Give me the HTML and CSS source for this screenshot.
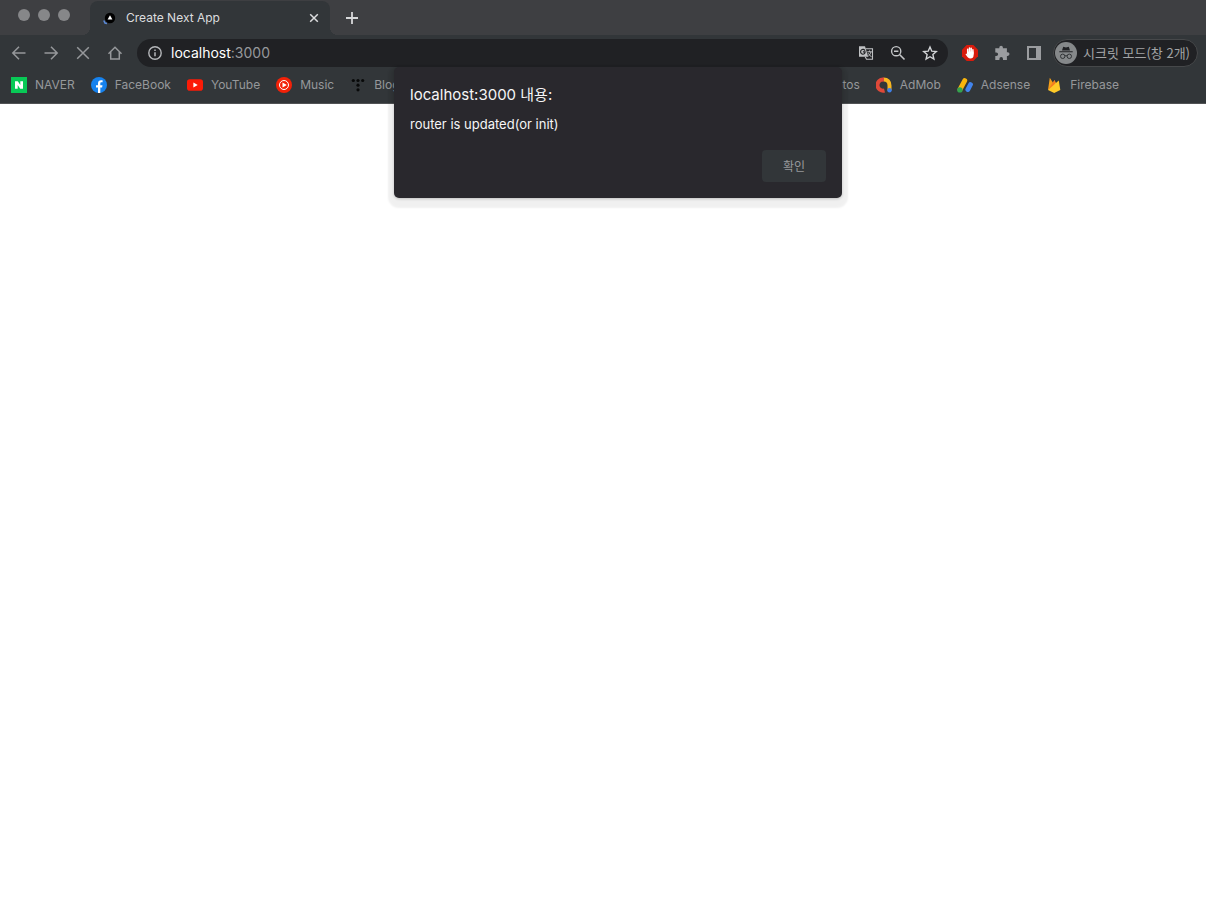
FILE: index.html
```html
<!DOCTYPE html>
<html lang="ko">
<head>
<meta charset="utf-8">
<title>Create Next App</title>
<link rel="stylesheet" href="styles.css">
</head>
<body>
<div class="window">
  <header class="chrome">
    <div class="tab-strip">
      <div class="lights"><span class="light"></span><span class="light"></span><span class="light"></span></div>
      <div class="tab">
        <svg class="icon" viewBox="0 0 16 16"><path d="M1.800 10.500 3 13 5 13.500" fill="none" stroke="#5b8ad8" stroke-width="1.600"/><circle cx="8" cy="8" r="5.200" fill="#000"/><path d="M8 5.300 10.400 9.500H5.600z" fill="#fff"/></svg>
        <span class="tab-title">Create Next App</span>
        <button class="icon-button" aria-label="Close tab"><svg class="icon" viewBox="0 0 16 16"><path d="M4.200 4.200 11.800 11.800M11.800 4.200 4.200 11.800" fill="none" stroke="#dcdddf" stroke-width="1.500"/></svg></button>
      </div>
      <button class="icon-button new-tab" aria-label="New tab"><svg class="icon" viewBox="0 0 16 16"><path d="M8 2v12M2 8h12" stroke="#d7d8da" stroke-width="1.800"/></svg></button>
    </div>

    <div class="toolbar">
      <nav class="nav" aria-label="Navigation">
        <button class="icon-button" aria-label="Back"><svg class="icon" viewBox="0 0 16 16"><path d="M14.500 8H2M8 1.800 1.800 8 8 14.200"/></svg></button>
        <button class="icon-button" aria-label="Forward"><svg class="icon" viewBox="0 0 16 16"><path d="M1.500 8H14M8 1.800 14.200 8 8 14.200"/></svg></button>
        <button class="icon-button" aria-label="Stop"><svg class="icon" viewBox="0 0 16 16"><path d="M2.200 2.200 13.800 13.800M13.800 2.200 2.200 13.800"/></svg></button>
        <button class="icon-button" aria-label="Home"><svg class="icon" viewBox="0 0 16 16"><path d="M1.500 8.700 8 2.200 14.500 8.700M3.700 7v7H6.800M12.300 7v7H6.500"/></svg></button>
      </nav>
      <div class="omnibox">
        <button class="icon-button" aria-label="Site information"><svg class="icon" viewBox="0 0 16 16"><circle cx="8" cy="8" r="6.200" fill="none" stroke="#b5b7ba" stroke-width="1.400"/><path d="M8 7.200v4M8 4.500v1.500" stroke="#b5b7ba" stroke-width="1.500"/></svg></button>
        <span class="address">localhost<span class="port">:3000</span></span>
        <div class="omnibox-actions">
          <button class="icon-button" aria-label="Translate"><svg class="icon" viewBox="0 0 16 16"><path d="M7.500 3.800h7v10.400H8.500l-1.300-2.500" fill="none" stroke="#bfc1c3" stroke-width="1.100"/><path d="M1 1.200h6l3.200 10.600H1z" fill="#bfc1c3"/><path d="M7 5.700C6.200 4.300 4.600 4 3.500 4.900 2 6.100 2.400 8.800 4.600 9.200c1.500.2 2.600-.900 2.500-2.400H4.900" fill="none" stroke="#202124" stroke-width="1.200"/><path d="M9.300 6.800h4.500M11.500 5.500v1.300M13 6.800c-.5 2.200-1.700 3.500-3 4.700M10 8.200l3.600 4" fill="none" stroke="#bfc1c3"/></svg></button>
          <button class="icon-button" aria-label="Zoom"><svg class="icon" viewBox="0 0 16 16"><path d="M9.800 9.800 14.500 14.500M4 6.200h4.400" stroke="#c5c7c9" stroke-width="1.600"/><circle cx="6.200" cy="6.200" r="4.600" fill="none" stroke="#c5c7c9" stroke-width="1.400"/></svg></button>
          <button class="icon-button" aria-label="Bookmark this page"><svg class="icon" viewBox="0 0 16 16"><path d="M8 2 9.800 6.200 14.300 6.600 10.900 9.600 11.900 14 8 11.700 4.100 14 5.100 9.600 1.700 6.600 6.200 6.200z" fill="none" stroke="#d3d5d7" stroke-width="1.400"/></svg></button>
        </div>
      </div>
      <div class="extensions">
        <button class="icon-button" aria-label="Content blocker"><svg class="icon" viewBox="0 0 16 16"><path d="M4.700 0h6.600L16 4.700v6.600L11.300 16H4.700L0 11.300V4.700z" fill="#d91b0c"/><path d="M5.700 9V4.300M7.500 8V3M9.200 8V3.300M10.900 9V4.800" stroke="#fff" stroke-width="1.500" stroke-linecap="round"/><path d="M5 6.500h6.600v3.700c0 2.300-1.300 3.300-3.200 3.300-2 0-2.800-1-4.900-4.200l.7-.7 1.500 1.100z" fill="#fff"/></svg></button>
        <button class="icon-button" aria-label="Extensions"><svg class="icon" viewBox="0 0 16 16"><path d="M1.300 3.300h4V2.500a1.800 1.800 0 0 1 3.600 0v.8h4v4h.8a1.800 1.800 0 0 1 0 3.600h-.8v4H9v-1a1.700 1.700 0 0 0-3.600 0v1H1.300V11h1a1.800 1.800 0 0 0 0-3.600h-1z" fill="#9b9da0"/></svg></button>
        <button class="icon-button" aria-label="Side panel"><svg class="icon" viewBox="0 0 16 16"><path d="M2 2h12v12H2z" fill="none" stroke="#9b9da0" stroke-width="2"/><path d="M10 2h4v12h-4z" fill="#9b9da0"/></svg></button>
      </div>
      <button class="profile">
        <svg class="avatar" viewBox="0 0 22 22"><circle cx="11" cy="11" r="11" fill="#85888a"/><path d="M7 8.500 8.200 4.700 11 5.400 13.800 4.700 15 8.500zM4.300 9.200h13.400v1H4.300z" fill="#202124"/><g fill="none" stroke="#303336"><circle cx="7.700" cy="14.300" r="2.200"/><circle cx="14.300" cy="14.300" r="2.200"/><path d="M9.900 14q1.100-.8 2.200 0"/></g></svg>
        <span>시크릿 모드(창 2개)</span>
      </button>
    </div>

    <nav class="bookmarks" aria-label="Bookmarks">
      <a class="bookmark" href="#"><svg class="icon" viewBox="0 0 16 16"><path d="M0 0h16v16H0z" fill="#08c956"/><path d="M4 4.300h2.800l2.500 3.600V4.300H12v7.400H9.200L6.700 8.100v3.600H4z" fill="#fff"/></svg>NAVER</a>
      <a class="bookmark" href="#"><svg class="icon" viewBox="0 0 16 16"><circle cx="8" cy="8" r="8" fill="#1682ee"/><path d="M7 16v-5.400H5V8.300h2V6.500c0-2.200 1.200-3.300 3.100-3.300l1.500.1v2H10.500C9.600 5.300 9.300 5.800 9.300 6.500v1.800h2.200l-.4 2.300H9.300V16z" fill="#fff"/></svg>FaceBook</a>
      <a class="bookmark" href="#"><svg class="icon" viewBox="0 0 16 16"><rect y="2.300" width="16" height="11.400" rx="2.800" fill="#fb1b07"/><path d="M6.400 5.500 10.700 8 6.400 10.500z" fill="#fff"/></svg>YouTube</a>
      <a class="bookmark" href="#"><svg class="icon" viewBox="0 0 16 16"><circle cx="8" cy="8" r="8" fill="#f32108"/><circle cx="8" cy="8" r="4.500" fill="none" stroke="#fff"/><path d="M6.500 5.400 10.800 8 6.500 10.600z" fill="#fff"/></svg>Music</a>
      <a class="bookmark" href="#"><svg class="icon" viewBox="0 0 16 16"><g fill="#080909"><circle cx="3.300" cy="3.500" r="1.600"/><circle cx="8" cy="3.500" r="1.600"/><circle cx="12.700" cy="3.500" r="1.600"/><circle cx="8" cy="8.200" r="1.600"/><circle cx="8" cy="12.800" r="1.600"/></g></svg>Blog</a>
      <a class="bookmark after-dialog" href="#">Photos</a>
      <a class="bookmark" href="#"><svg class="icon" viewBox="0 0 16 16"><path d="M7.500 2.500A5.600 5.600 0 1 0 8.500 13.500" fill="none" stroke="#df4939" stroke-width="4"/><path d="M7.700 2.500C11.500 2.500 13.500 5 13.500 8.500V13" fill="none" stroke="#f9b720" stroke-width="4"/><path d="M3 3.500A7.600 7.600 0 0 1 8 .5v4z" fill="#df4939"/><circle cx="13.500" cy="13.300" r="2.200" fill="#3f80e8"/></svg>AdMob</a>
      <a class="bookmark" href="#"><svg class="icon" viewBox="0 0 16 16"><g stroke-width="4.800" stroke-linecap="round"><path d="M3 12.500 7.800 3.500" stroke="#f9b50c"/><path d="M10.800 12.600 13.500 7.500" stroke="#4284ed"/></g><circle cx="2.900" cy="12.900" r="2.700" fill="#34a34f"/></svg>Adsense</a>
      <a class="bookmark" href="#"><svg class="icon" viewBox="0 0 16 16"><path d="M2 13 3.800.7 7 5.800 8.500 3l2 4z" fill="#f6a019"/><path d="M2 13 8.500 3l1.500 7z" fill="#f57c20"/><path d="M2 13 12.800 3.500 14.300 13 8.200 16z" fill="#ffca28"/></svg>Firebase</a>
    </nav>
  </header>

  <main class="page"></main>

  <section class="dialog" role="alertdialog" aria-labelledby="dialog-title" aria-describedby="dialog-message">
    <h1 class="dialog-title" id="dialog-title">localhost:3000 내용:</h1>
    <p class="dialog-message" id="dialog-message">router is updated(or init)</p>
    <button class="confirm">확인</button>
  </section>
</div>
</body>
</html>
```
FILE: styles.css
```css
* { box-sizing: border-box; }

body {
  margin: 0;
  background: #fff;
  font-family: Inter, "Noto Sans CJK KR", sans-serif;
  font-size: 12px;
}

button {
  border: 0;
  padding: 0;
  background: none;
  font: inherit;
  color: inherit;
}

.window {
  position: relative;
  display: flex;
  flex-direction: column;
  min-height: 100vh;
}

.chrome {
  background: #323639;
  border-bottom: 1px solid #515355;
}

.icon {
  display: block;
  flex: none;
  width: 16px;
  height: 16px;
}

.icon-button { flex: none; }

.tab-strip {
  display: flex;
  height: 35px;
  padding-top: 1px;
  background: #3e3f42;
}

.lights {
  display: flex;
  gap: 8px;
  width: 90px;
  padding: 8px 0 0 18px;
}

.light {
  width: 12px;
  height: 12px;
  border-radius: 50%;
  background: #868789;
}

.tab {
  position: relative;
  display: flex;
  align-items: center;
  gap: 8px;
  width: 240px;
  padding: 0 8px 0 12px;
  border-radius: 8px 8px 0 0;
  background: #323639;
  color: #dcdddf;
}

.tab::before,
.tab::after {
  content: "";
  position: absolute;
  bottom: 0;
  width: 8px;
  height: 8px;
}

.tab::before {
  right: 100%;
  background: radial-gradient(circle at 0 0, transparent 8px, #323639 8px);
}

.tab::after {
  left: 100%;
  background: radial-gradient(circle at 100% 0, transparent 8px, #323639 8px);
}

.tab-title {
  flex: 1;
  padding-bottom: 2px;
}

.new-tab { margin-left: 14px; }

.toolbar {
  display: flex;
  align-items: center;
  padding: 4px 8px 4px 11px;
}

.nav {
  display: flex;
  gap: 16px;
  margin-right: 14px;
  fill: none;
  stroke: #96989b;
  stroke-width: 1.5;
}

.omnibox {
  display: flex;
  flex: 1;
  align-items: center;
  gap: 8px;
  height: 28px;
  padding: 0 10px;
  border-radius: 14px;
  background: #202124;
}

.address {
  flex: 1;
  padding-bottom: 1px;
  color: #fff;
  font-size: 14px;
}

.port { color: #96989b; }

.omnibox-actions,
.extensions {
  display: flex;
  gap: 16px;
}

.extensions { margin: 0 11px 0 14px; }

.profile {
  display: flex;
  align-items: center;
  gap: 6px;
  height: 28px;
  padding: 0 7px 0 1px;
  border: 1px solid #46484a;
  border-radius: 14px;
  background: #202124;
  color: #a2a4a6;
  font-family: "Noto Sans CJK KR", sans-serif;
  font-size: 13px;
  line-height: 16px;
  white-space: nowrap;
}

.avatar {
  width: 22px;
  height: 22px;
}

.bookmarks {
  display: flex;
  align-items: center;
  gap: 16px;
  height: 32px;
  padding: 0 11px 4px;
  overflow: hidden;
}

.bookmark {
  display: flex;
  flex: none;
  align-items: center;
  gap: 8px;
  color: #96989b;
  line-height: 16px;
  text-decoration: none;
}

.after-dialog { margin-left: 405px; }

.page {
  flex: 1;
  background: #fff;
}

.dialog {
  position: absolute;
  top: 67px;
  left: 394px;
  display: flex;
  flex-direction: column;
  width: 448px;
  padding: 17px 16px 16px;
  border-radius: 5px;
  background: #29282d;
  box-shadow: 0 4px 2px 6px rgba(0, 0, 0, 0.06), 0 1px 3px rgba(0, 0, 0, 0.2);
  color: #f5f5f6;
}

.dialog-title {
  margin: 0 0 9px;
  font-size: 15px;
  font-weight: 400;
  line-height: 22px;
}

.dialog-message {
  margin: 0 0 16px;
  font-size: 13px;
  line-height: 19px;
}

.confirm {
  align-self: flex-end;
  width: 64px;
  height: 32px;
  padding-bottom: 2px;
  border-radius: 4px;
  background: #323639;
  color: #96989b;
}
```
